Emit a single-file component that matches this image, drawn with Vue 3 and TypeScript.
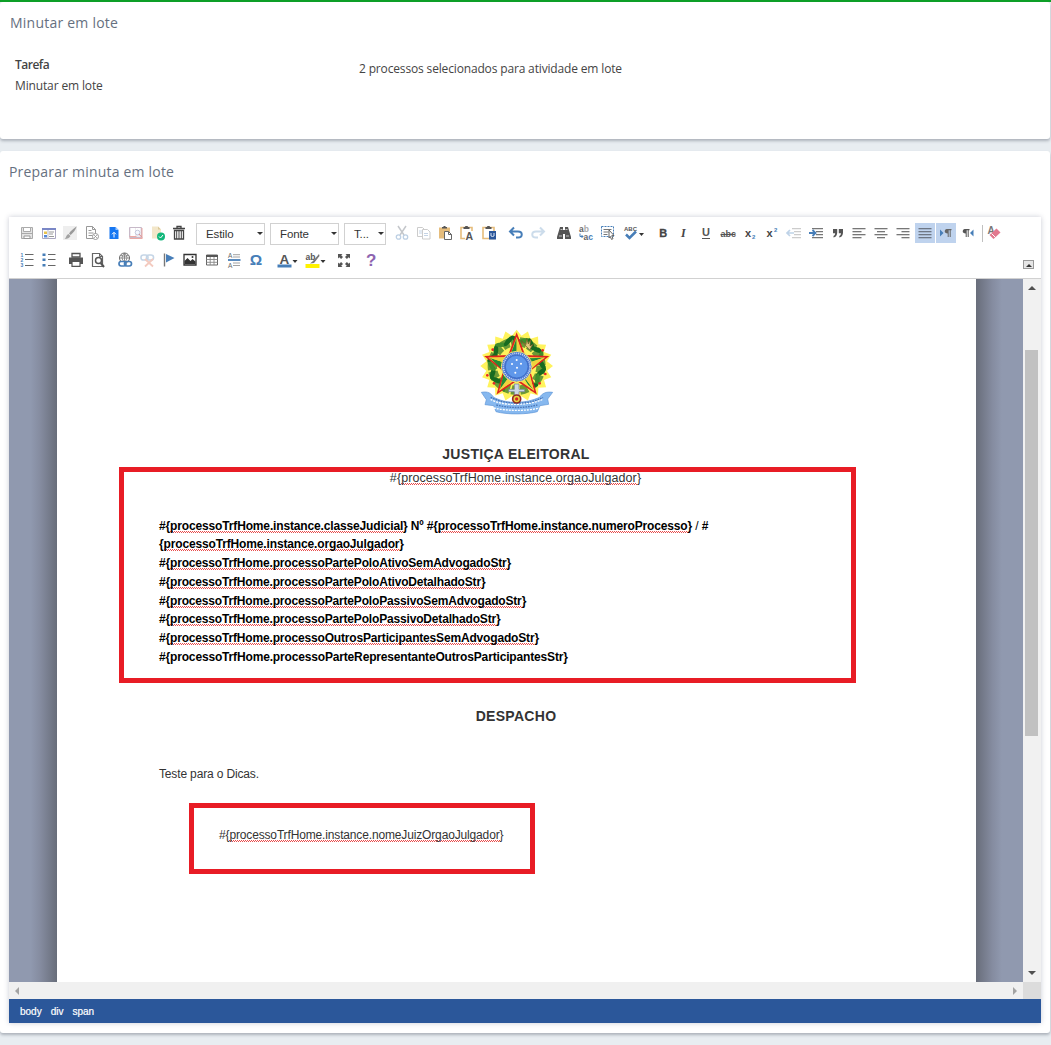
<script setup lang="ts">
interface Tool {
  icon: string
  name: string
  active?: boolean
  wide?: boolean
}

interface Segment {
  text: string
  wavy?: boolean
  light?: boolean
}

const lines = (x: number, w: number[], c = '#777', right = false, center = false): string =>
  w
    .map((n, i) => {
      const start = right ? x + 13 - n : center ? x + (13 - n) / 2 : x
      return `<rect x="${start}" y="${5 + i * 3}" width="${n}" height="1.3" fill="${c}"/>`
    })
    .join('')

const icons: Record<string, string> = {
  save: '<path d="M4.500 4.500h11v11h-11z" fill="#e4e4e4" stroke="#aaa"/><path d="M6.500 4.500h7v4h-7z" fill="#fff" stroke="#aaa"/><path d="M4 10.500h12" stroke="#aaa"/><path d="M7 13h6v2.500H7z" fill="#fff" stroke="#999"/>',
  template: '<path d="M3.500 5.500h13v10h-13z" fill="#fff" stroke="#aaa7c0"/><path d="M3 5h14v2H3z" fill="#7a87c6"/><path d="M5 8.500h3v2.500H5z" fill="#e8c24c"/><path d="M5 12h3v2.500H5z" fill="#5689d8"/><path d="M10 9h5M10 11h4M10 13.500h5" stroke="#999"/><path d="M9 7v8" stroke="#bbc"/>',
  brush: '<path d="M3 3h14v14H3z" fill="#eee"/><path d="M16.500 3.500C14 5 10.500 8 9 10.500l1.500 1.500C13 10 16 6.500 16.500 3.500z" fill="#999"/><path d="M8.500 11l2 2c-1 2-3 3-6 3 1.800-1 1.500-4 4-5z" fill="#a2a2a2"/>',
  pageOff: '<path d="M4.500 3.500h6l3 3v9h-9z" fill="#fff" stroke="#999"/><path d="M10.500 3.500v3h3M6.500 7.500h3M6.500 10h5M6.500 12.500h4" stroke="#999" fill="none"/><circle cx="13.500" cy="13.500" r="3" fill="#fff" stroke="#999"/><path d="M12.200 12.200l2.600 2.600m0-2.600l-2.600 2.600" stroke="#999"/>',
  upload: '<path d="M5.500 4h6l3 3v9h-9z" fill="#1677f2"/><path d="M11.500 4v3h3z" fill="#9ac7ff"/><path d="M10 14.500v-5M8 11.300l2-2 2 2" stroke="#fff" fill="none"/>',
  book: '<path d="M3.500 4.500h12v10h-12z" fill="#eeeaf0" stroke="#c7b9c8"/><path d="M5 5h4v8H5zM10 5h4v5h-4z" fill="#fff"/><path d="M3.500 13.500h7M3.500 15.500h13M16 5v10" stroke="#eba9a5"/><circle cx="11.500" cy="9.500" r="2.300" fill="#f5f8ff" stroke="#c5c9dc"/><path d="M13 11l3 3.500" stroke="#df8d8d"/>',
  approve: '<path d="M4 3.500h6l3 3v9H4z" fill="#f3e7ca"/><path d="M10 3.500v3h3z" fill="#dcc999"/><circle cx="13" cy="13.500" r="4" fill="#12b77b"/><path d="M11 13.500l1.500 1.500 2.500-3" stroke="#fff" fill="none"/>',
  trash: '<path d="M4 5.500h12M8 5V3.500h4V5M5.500 7.500h9v8.500h-9z" stroke="#444" stroke-width="1.300" fill="none"/><path d="M7.700 8v8M10 8v8M12.300 8v8" stroke="#444"/>',
  cut: '<path d="M6 3l6 9M14 3l-6 9" stroke="#c4c7cb" stroke-width="1.500"/><circle cx="6.500" cy="14" r="2.200" stroke="#bdd0e4" stroke-width="1.300" fill="none"/><circle cx="13.500" cy="14" r="2.200" stroke="#bdd0e4" stroke-width="1.300" fill="none"/>',
  copy: '<path d="M3.500 4.500h5l2 2v7h-7z" fill="#fff" stroke="#ccc"/><path d="M8.500 6.500h5l2.500 2.500v7h-7.500z" fill="#fff" stroke="#ccc"/><path d="M10 10.500h4M10 12.500h4M5 8h3M5 10h3" stroke="#c5d4e5"/>',
  paste: '<path d="M4 4.500h11v11H4z" fill="#e6bd7c"/><path d="M7 5.500V4h1.500V3h2v1H12v1.500z" fill="#555"/><path d="M9.500 8.500h4l3 3v5h-7z" fill="#fff" stroke="#666"/><path d="M13.500 8.500v3h3" fill="none" stroke="#666"/>',
  pasteText: '<path d="M4 4.500h11v11H4z" fill="#fff" stroke="#e6bd7c" stroke-width="1.600"/><path d="M6.500 6V4h1.700V3h2.600v1h1.700v2z" fill="#555"/><path d="M8 8h9v9H8z" fill="#fff"/><text x="8.500" y="17" font-size="10.500" font-weight="bold" fill="#555">A</text>',
  pasteWord: '<path d="M4 4.500h11v11H4z" fill="#fff" stroke="#e6bd7c" stroke-width="1.600"/><path d="M6.500 6V4h1.700V3h2.600v1h1.700v2z" fill="#555"/><path d="M10 8h7v8.500h-7z" fill="#2b579a"/><path d="M12 10v3l1.500 .5 1.500-.5v-3" stroke="#dce6f5" fill="none"/>',
  undo: '<path d="M5 8.500h7c5 0 5 6 0 6h-2M8 4.500l-4 4 4 4" stroke="#477eb8" stroke-width="2" fill="none"/>',
  redo: '<path d="M15 8.500H8c-5 0-5 6 0 6h2M12 4.500l4 4-4 4" stroke="#ccdceb" stroke-width="2" fill="none"/>',
  find: '<path d="M6 4h3v3h2V4h3l3 10v2h-6v-5H9v5H3v-2z" fill="#555"/><path d="M5 13h3M12 13h3M6.500 6.500h2M11.500 6.500h2" stroke="#ddd" stroke-width=".8"/>',
  replace: '<text x="3" y="8.500" font-size="8.500" font-weight="bold" fill="#666">a<tspan fill="#aaa">b</tspan></text><text x="7.500" y="17" font-size="8.500" font-weight="bold" fill="#666">a<tspan fill="#477eb8">c</tspan></text><path d="M4 10.500v3h3M5.500 12l1.500 1.500L5.500 15" fill="none" stroke="#477eb8"/>',
  select: '<path d="M3.500 3.500h12v10h-12z" fill="none" stroke="#477eb8" stroke-dasharray="2 1"/><path d="M5.500 6.500h8M5.500 9h5M5.500 11.500h4" stroke="#777"/><path d="M11 7l5 5.500-2.300.2 1.300 3-1.500.7-1.300-3L11 15z" fill="#fff" stroke="#555" stroke-width=".9"/>',
  spell: '<text x="2" y="7.500" font-size="6" font-weight="bold" fill="#555">ABC</text><path d="M4 11.500l3.500 3.500L14 8.500" stroke="#477eb8" stroke-width="2.500" fill="none"/><path d="M17 10h5l-2.500 3z" fill="#333"/>',
  bold: '<text x="6.200" y="14" font-size="11" font-weight="bold" fill="#444" stroke="#444" stroke-width=".3">B</text>',
  italic: '<text x="7" y="14" font-size="12" font-style="italic" font-weight="bold" font-family="Liberation Serif" fill="#444">I</text>',
  underline: '<text x="6" y="13" font-size="11" font-weight="bold" fill="#555">U</text><path d="M6 15.500h8" stroke="#555"/>',
  strike: '<text x="2.500" y="13.800" font-size="9" font-weight="bold" fill="#555">abc</text><path d="M2.500 11.500h15" stroke="#555"/>',
  sub: '<text x="5" y="13.500" font-size="11" font-weight="bold" fill="#444">x</text><text x="12" y="15.500" font-size="6" font-weight="bold" fill="#477eb8">2</text>',
  sup: '<text x="4.500" y="13.500" font-size="11" font-weight="bold" fill="#444">x</text><text x="12" y="8.800" font-size="6" font-weight="bold" fill="#477eb8">2</text>',
  outdent: '<path d="M8 5.700h9M10 8.700h7M10 11.700h7M8 14.700h9" stroke="#ccc" stroke-width="1.200"/><path d="M3 10h7M6 7l-3 3 3 3" stroke="#bfd3e8" stroke-width="1.700" fill="none"/>',
  indent: '<path d="M6 5.700h11M10 8.700h7M10 11.700h7M6 14.700h11" stroke="#777" stroke-width="1.200"/><path d="M3 10h6M6.500 7l3 3-3 3" stroke="#477eb8" stroke-width="1.800" fill="none"/>',
  quote: '<path d="M5 6h4.200v4q-.5 4-3.700 4.500v-1.500q1.700-.7 1.700-2.700H5zM10.800 6H15v4q-.5 4-3.700 4.500v-1.500q1.700-.7 1.700-2.700h-2.200z" fill="#555"/>',
  left: lines(3.5, [13, 9, 13, 9]),
  center: lines(3.5, [13, 8, 13, 8], '#777', false, true),
  right: lines(3.5, [13, 8, 13, 8], '#777', true),
  justify: lines(3.5, [13, 13, 13, 13], '#6e7785'),
  ltr: '<path d="M4 6.500l3.500 3.500L4 13.500z" fill="#477eb8"/><path d="M10.500 6h5v1.200h-.8V14h-1V7.200h-1V14h-1v-3.500q-3-.2-3-2.200t1.800-2.300z" fill="#666"/>',
  rtl: '<path d="M15.500 6.500L12 10l3.500 3.500z" fill="#477eb8"/><path d="M6.500 6h5v1.200h-.8V14h-1V7.200h-1V14h-1v-3.500q-3-.2-3-2.200T6.500 6z" fill="#555"/>',
  erase: '<text x="3.500" y="11" font-size="10" font-weight="bold" fill="#777">A</text><path d="M12.500 5.500l4 4-7 6.500-4-4z" fill="#e2798f"/><path d="M7.500 10.500l4 4" stroke="#fff"/>',
  ordered: '<text x="3.500" y="7" font-size="5" font-weight="bold" fill="#477eb8">1</text><text x="3.500" y="12" font-size="5" font-weight="bold" fill="#477eb8">2</text><text x="3.500" y="17" font-size="5" font-weight="bold" fill="#477eb8">3</text><path d="M8 4.500h8.500M8 9.500h8.500M8 15.500h8.500" stroke="#666" stroke-width="1.200"/>',
  bullets: '<path d="M3.500 3.500h3v2.600h-3zM3.500 8.500h3v2.600h-3zM3.500 14h3v2.600h-3z" fill="#477eb8"/><path d="M9 4.500h7.500M9 9.500h7.500M9 15.500h7.500" stroke="#666" stroke-width="1.200"/>',
  print: '<path d="M6 3.500h8V7H6z" fill="#fff" stroke="#555" stroke-width="1.300"/><path d="M3 7.500h14V14H3z" fill="#555"/><path d="M6 11.500h8v4.800H6z" fill="#fff" stroke="#555" stroke-width="1.200"/>',
  preview: '<path d="M4.500 3.500h7l3 3v10h-10z" fill="#fff" stroke="#666" stroke-width="1.200"/><path d="M11.500 3.500v3h3" fill="none" stroke="#666"/><circle cx="10.500" cy="10.500" r="3" fill="#fff" stroke="#555" stroke-width="1.500"/><path d="M12.700 13l3.300 4" stroke="#555" stroke-width="2"/>',
  link: '<circle cx="9.500" cy="8" r="5" fill="#fff" stroke="#666"/><path d="M4.500 8h10M9.500 3v9M6 5.500q3.500 1.500 7 0M9.500 3q-5 5 0 9M9.500 3q5 5 0 9" stroke="#777" fill="none" stroke-width=".8"/><rect x="4" y="11.500" width="7" height="4.500" rx="2.200" fill="#fff" stroke="#477eb8" stroke-width="1.700"/><rect x="9.500" y="11.500" width="7" height="4.500" rx="2.200" fill="none" stroke="#477eb8" stroke-width="1.700"/>',
  unlink: '<rect x="4" y="5" width="7" height="5" rx="2.300" fill="none" stroke="#c5d5e6" stroke-width="1.600"/><rect x="9.500" y="5" width="7" height="5" rx="2.300" fill="none" stroke="#c5d5e6" stroke-width="1.600"/><path d="M8 9l8 7.500M16 9l-8 7.500" stroke="#f3cabf" stroke-width="1.800"/>',
  flag: '<path d="M5.500 3.500v13" stroke="#777" stroke-width="1.400"/><path d="M7 4l8.500 4L7 12.500z" fill="#477eb8"/>',
  image: '<path d="M4 4.500h12v10.500H4z" fill="#fff" stroke="#333" stroke-width="1.300"/><path d="M4.500 14v-3l3-3 3 3 2-2 3 2.500v2.500z" fill="#333"/><circle cx="12.500" cy="7" r="1" fill="#333"/>',
  table: '<path d="M4.500 5h11v10h-11z" fill="#fff" stroke="#666"/><path d="M4 5h12v2H4z" fill="#555"/><path d="M4.500 9.500h11M4.500 12.300h11M8.200 7v8M12 7v8" stroke="#888" stroke-width=".9"/>',
  rule: '<text x="4" y="8" font-size="6.500" fill="#666">A</text><text x="4" y="17.500" font-size="6.500" fill="#666">A</text><path d="M9 4.700h7M9 7h7M9 13h7M9 15.500h7" stroke="#999" stroke-width=".9"/><path d="M4 10h12.500" stroke="#477eb8" stroke-width="1.800"/>',
  omega: '<text x="3.800" y="15" font-size="15.500" font-weight="bold" fill="#477eb8">Ω</text>',
  color: '<text x="4.500" y="13.500" font-size="13.500" font-weight="bold" fill="#555">A</text><path d="M2.500 14.500h14v3h-14z" fill="#477eb8"/><path d="M17.500 10h5l-2.500 3z" fill="#333"/>',
  highlight: '<path d="M2.500 14h14v4h-14z" fill="#fff200"/><text x="2.500" y="9.500" font-size="8.500" font-weight="bold" fill="#555">ab</text><path d="M16 4l-6 7-3 2.500 4-.5 5.500-7z" fill="#777"/><path d="M17.500 10h5l-2.500 3z" fill="#333"/>',
  expand: '<path d="M4 4h4.500L7.200 5.300 9 7.100 7.100 9 5.300 7.200 4 8.500zM16 4v4.500l-1.300-1.300L12.900 9 11 7.100l1.800-1.800L11.500 4zM4 17v-4.500l1.300 1.300L7.100 12 9 13.900l-1.800 1.800L8.500 17zM16 17h-4.500l1.300-1.300-1.800-1.800 1.900-1.900 1.800 1.800 1.300-1.300z" fill="#555"/>',
  help: '<text x="4.900" y="16" font-size="17" font-weight="bold" fill="#8e64b0">?</text>',
}

const t = (icon: string, name: string, extra: Partial<Tool> = {}): Tool => ({ icon, name, ...extra })

const documentTools: Tool[] = [
  t('save', 'Salvar'), t('template', 'Modelo'), t('brush', 'Formatar'), t('pageOff', 'Nova página'),
  t('upload', 'Enviar'), t('book', 'Consultar'), t('approve', 'Aprovar'), t('trash', 'Excluir'),
]
const combos = [
  { label: 'Estilo', size: 'combo-m' },
  { label: 'Fonte', size: 'combo-m' },
  { label: 'T...', size: 'combo-s' },
]
const topGroups: { id: string; tools: Tool[] }[] = [
  { id: 'g-clip', tools: [t('cut', 'Recortar'), t('copy', 'Copiar'), t('paste', 'Colar'), t('pasteText', 'Colar texto'), t('pasteWord', 'Colar do Word')] },
  { id: 'g-undo', tools: [t('undo', 'Desfazer'), t('redo', 'Refazer')] },
  { id: 'g-find', tools: [t('find', 'Localizar'), t('replace', 'Substituir'), t('select', 'Selecionar tudo'), t('spell', 'Ortografia', { wide: true })] },
  { id: 'g-style', tools: [t('bold', 'Negrito'), t('italic', 'Itálico'), t('underline', 'Sublinhado'), t('strike', 'Tachado'), t('sub', 'Subscrito'), t('sup', 'Sobrescrito')] },
  { id: 'g-par', tools: [
    t('outdent', 'Diminuir recuo'), t('indent', 'Aumentar recuo'), t('quote', 'Citação'), t('left', 'Esquerda'),
    t('center', 'Centralizar'), t('right', 'Direita'), t('justify', 'Justificar', { active: true }),
    t('ltr', 'Esquerda para direita', { active: true }), t('rtl', 'Direita para esquerda'),
  ] },
]
const bottomGroups: { id: string; tools: Tool[] }[] = [
  { id: 'b-list', tools: [t('ordered', 'Lista numerada'), t('bullets', 'Lista')] },
  { id: 'b-print', tools: [t('print', 'Imprimir'), t('preview', 'Visualizar')] },
  { id: 'b-insert', tools: [t('link', 'Link'), t('unlink', 'Remover link'), t('flag', 'Âncora'), t('image', 'Imagem'), t('table', 'Tabela'), t('rule', 'Quebra'), t('omega', 'Símbolo')] },
  { id: 'b-color', tools: [t('color', 'Cor do texto', { wide: true }), t('highlight', 'Cor de fundo', { wide: true })] },
  { id: 'b-max', tools: [t('expand', 'Maximizar')] },
  { id: 'b-help', tools: [t('help', 'Ajuda')] },
]

const field = (name: string): Segment[] => [{ text: '#{' }, { text: name, wavy: true }, { text: '}' }]
const processLines: Segment[][] = [
  [
    ...field('processoTrfHome.instance.classeJudicial'),
    { text: ' Nº ' },
    ...field('processoTrfHome.instance.numeroProcesso'),
    { text: ' / ', light: true },
    { text: '#' },
  ],
  [{ text: '{' }, { text: 'processoTrfHome.instance.orgaoJulgador', wavy: true }, { text: '}' }],
  field('processoTrfHome.processoPartePoloAtivoSemAdvogadoStr'),
  field('processoTrfHome.processoPartePoloAtivoDetalhadoStr'),
  field('processoTrfHome.processoPartePoloPassivoSemAdvogadoStr'),
  field('processoTrfHome.processoPartePoloPassivoDetalhadoStr'),
  field('processoTrfHome.processoOutrosParticipantesSemAdvogadoStr'),
  [{ text: '#{processoTrfHome.processoParteRepresentanteOutrosParticipantesStr}' }],
]

const starPoints = (cx: number, cy: number, outer: number, inner: number, n = 5): string =>
  Array.from({ length: n * 2 }, (_, i) => {
    const r = i % 2 ? inner : outer
    const a = -Math.PI / 2 + (i * Math.PI) / n
    return `${(cx + r * Math.cos(a)).toFixed(1)},${(cy + r * Math.sin(a)).toFixed(1)}`
  }).join(' ')

const leaves = Array.from({ length: 17 }, (_, i) => {
  const a = ((125 + i * 18) * Math.PI) / 180
  return { x: 140 + 76 * Math.cos(a), y: 135 + 76 * Math.sin(a), r: 125 + i * 18 + (i % 2 ? 60 : 125) }
})
</script>

<template>
  <div class="page">
    <section class="card task-card">
      <h2 class="card-title">Minutar em lote</h2>
      <div class="task-row">
        <div class="task">
          <strong class="task-label">Tarefa</strong>
          <span class="task-name">Minutar em lote</span>
        </div>
        <p class="selection">2 processos selecionados para atividade em lote</p>
      </div>
    </section>

    <section class="card draft-card">
      <h2 class="card-title draft-title">Preparar minuta em lote</h2>
      <div class="editor">
        <div class="toolbar">
          <div class="tool-row">
            <div class="group g-doc">
              <span v-for="b in documentTools" :key="b.icon" class="tool" :aria-label="b.name">
                <svg width="20" height="20" viewBox="0 0 20 20" v-html="icons[b.icon]"></svg>
              </span>
            </div>
            <div class="combos">
              <span v-for="c in combos" :key="c.label" class="combo" :class="c.size">
                {{ c.label }}<i class="caret"></i>
              </span>
            </div>
            <div v-for="g in topGroups" :key="g.id" class="group" :class="g.id">
              <span v-for="b in g.tools" :key="b.icon" class="tool" :class="{ active: b.active, wide: b.wide }" :aria-label="b.name">
                <svg width="20" height="20" viewBox="0 0 20 20" v-html="icons[b.icon]"></svg>
              </span>
            </div>
            <i class="separator"></i>
            <span class="tool" aria-label="Remover formatação">
              <svg width="20" height="20" viewBox="0 0 20 20" v-html="icons.erase"></svg>
            </span>
          </div>
          <div class="tool-row second">
            <div v-for="g in bottomGroups" :key="g.id" class="group" :class="g.id">
              <span v-for="b in g.tools" :key="b.icon" class="tool" :class="{ wide: b.wide }" :aria-label="b.name">
                <svg width="20" height="20" viewBox="0 0 20 20" v-html="icons[b.icon]"></svg>
              </span>
            </div>
            <span class="collapse"><i class="collapse-arrow"></i></span>
          </div>
        </div>

        <div class="viewport">
          <div class="desk desk-left"></div>
          <article class="sheet">
            <svg class="emblem" width="95" height="100" viewBox="0 0 285 300">
              <polygon :points="starPoints(140, 138, 109, 92, 20)" fill="#fff35c" />
              <circle cx="140" cy="138" r="73" fill="none" stroke="#6b9a35" stroke-width="28" stroke-dasharray="22 5" />
              <ellipse v-for="(l, i) in leaves" :key="i" :cx="l.x" :cy="l.y" rx="19" ry="7" :fill="i % 3 ? '#176b20' : '#3f8d2c'" :transform="`rotate(${l.r} ${l.x} ${l.y})`" />
              <path d="M153 62l15 12 2-18 5 16 7-14-2 20 9-5-10 17z" fill="#e1c77b" stroke="#665320" stroke-width="2" />
              <g fill="#e82727">
                <circle cx="68" cy="89" r="4" /><circle cx="52" cy="166" r="4" /><circle cx="218" cy="91" r="4" /><circle cx="226" cy="162" r="4" /><circle cx="72" cy="190" r="4" /><circle cx="209" cy="190" r="4" />
              </g>
              <path d="M133 192h14v16h17v7h-17v32h-14v-32h-17v-7h17z" fill="#ccd7e5" stroke="#6b7890" stroke-width="2" />
              <polygon :points="starPoints(140, 140, 103, 43)" fill="#de251e" />
              <polygon :points="starPoints(140, 140, 90, 36)" fill="#f7df45" />
              <path d="M140 54v86L119 111zM221 113l-81 27 35-25zM190 208l-50-68 35 55zM90 208l50-68-36 7zM59 113l81 27-48 4z" fill="#258b35" />
              <path d="M140 54v86l21-29zM221 113l-81 27 48 3zM190 208l-50-68 36 7zM90 208l50-68-16 48zM59 113l81 27-35-26z" fill="#f0d33d" />
              <circle cx="140" cy="140" r="46" fill="#4876d2" stroke="#f7e46b" stroke-width="3" />
              <circle cx="140" cy="140" r="40" fill="none" stroke="#d4e1f5" stroke-width="5" stroke-dasharray="3 3" />
              <circle cx="140" cy="140" r="34" fill="#5f97ea" stroke="#3764bd" stroke-width="2" />
              <g fill="#fff"><circle cx="140" cy="120" r="3" /><circle cx="141" cy="143" r="3" /><circle cx="126" cy="132" r="3" /><circle cx="153" cy="131" r="3" /><circle cx="136" cy="158" r="3" /></g>
              <path d="M34 217c21-4 29 3 37 15 29 14 52 16 69 14 27 1 45-4 69-14 7-12 19-18 39-15l-15 20 3 16-26 4-8 18c-28 8-90 10-124 0l-7-18-26-3 4-15z" fill="#86b8ef" stroke="#5f95d6" stroke-width="2" />
              <path d="M62 238c16 10 46 16 78 15s59-5 78-15M72 264c38 9 97 10 136 0" fill="none" stroke="#fff" stroke-width="4" stroke-dasharray="6 3" />
              <path d="M62 232c42 22 115 24 157 0M79 255c42 10 80 10 123 0" fill="none" stroke="#4a76b8" stroke-width="4" stroke-dasharray="5 3" />
              <circle cx="140" cy="237" r="12" fill="#e8d442" stroke="#8f2c24" stroke-width="5" />
              <circle cx="140" cy="237" r="5" fill="#d82822" />
            </svg>
            <h1 class="heading court">JUSTIÇA ELEITORAL</h1>
            <p class="organ">#{<span class="wavy">processoTrfHome.instance.orgaoJulgador</span>}</p>
            <div class="process">
              <p v-for="(line, n) in processLines" :key="n" class="process-line" :class="`line-${n + 1}`"><span v-for="(s, i) in line" :key="i" :class="{ wavy: s.wavy, light: s.light }">{{ s.text }}</span></p>
            </div>
            <h1 class="heading order">DESPACHO</h1>
            <p class="text">Teste para o Dicas.</p>
            <p class="judge">#{<span class="wavy">processoTrfHome.instance.nomeJuizOrgaoJulgador</span>}</p>
            <div class="mark mark-process"></div>
            <div class="mark mark-judge"></div>
          </article>
          <div class="desk desk-right"></div>
          <div class="vscroll">
            <i class="up"></i>
            <div class="track"><div class="thumb"></div></div>
            <i class="down"></i>
          </div>
        </div>
        <div class="hscroll">
          <div class="htrack"><i class="prev"></i><i class="next"></i></div>
          <div class="corner"></div>
        </div>
        <footer class="path">
          <span>body</span><span>div</span><span>span</span>
        </footer>
      </div>
    </section>
  </div>
</template>

<style>
body {
  background: #e8edf1;
  overflow: hidden;
}
</style>

<style scoped>
.page {
  width: 1051px;
  height: 1045px;
  overflow: hidden;
  background: #e8edf1;
  border-top: 2px solid #0d9f27;
  box-sizing: border-box;
  font-family: "Open Sans", sans-serif;
  color: #444;
}
h1, h2, p { margin: 0; }
.card {
  background: #fff;
  border-radius: 3px;
  box-shadow: 0 2px 3px rgba(60, 70, 85, 0.35);
  box-sizing: border-box;
  width: 1050px;
}
.task-card { height: 137px; padding: 11px 0 0 10px; }
.card-title {
  font-size: 14px;
  line-height: 20px;
  font-weight: 400;
  color: #667080;
  letter-spacing: 0.23px;
}
.draft-title { letter-spacing: 0.2px; }
.task-row { display: flex; padding: 22px 0 0 5px; font-size: 12px; letter-spacing: -0.14px; }
.task { width: 344px; display: flex; flex-direction: column; line-height: 20.5px; }
.task-label { font-weight: 600; letter-spacing: -0.5px; }
.selection { padding-top: 4px; line-height: 20px; letter-spacing: -0.155px; }
.draft-card { margin-top: 12px; height: 882px; padding: 11px 9px 0; }
.editor {
  margin-top: 35px;
  height: 806px;
  width: 1032px;
  box-shadow: 0 0 5px rgba(60, 70, 100, 0.28);
  font-family: "Liberation Sans", Arial, sans-serif;
}
.toolbar {
  height: 62px;
  box-sizing: border-box;
  padding: 3px 0 0 7px;
  border-bottom: 1px solid #d1d1d1;
  background: #fff;
}
.tool-row { display: flex; align-items: center; height: 26px; }
.tool-row.second { height: 28px; }
.group { display: flex; }
.tool {
  width: 21.8px;
  height: 20px;
  display: flex;
  justify-content: center;
  flex: none;
}
.tool svg { flex: none; overflow: visible; font-family: "Liberation Sans", Arial, sans-serif; }
.tool.active { background: #bfd3ee; width: 20px; margin: 0 0.900px; }
.combos { display: flex; gap: 5px; margin: 2px 0 0 5.600px; }
.combo {
  height: 22px;
  box-sizing: border-box;
  border: 1px solid #d1d1d1;
  display: flex;
  align-items: center;
  justify-content: space-between;
  padding: 0 1px 1px 9px;
  font-size: 11.500px;
  letter-spacing: -0.1px;
  color: #333;
}
.combo-m { width: 69px; }
.combo-s { width: 42px; }
.caret { border: 3px solid transparent; border-top-color: #333; border-bottom: 0; }
.g-clip { margin-left: 5px; }
.g-undo { margin-left: 5px; }
.g-find { margin-left: 5px; }
.g-find .wide { margin-left: 2.500px; }
.g-style { margin-left: 8.500px; }
.g-par { margin-left: 0.500px; }
.separator { width: 1px; height: 17px; background: #c0c0c0; margin: 0 0 0 3px; }
.b-print { margin-left: 5.500px; }
.b-insert { margin-left: 5.500px; }
.b-color { margin-left: 8.500px; }
.b-color .wide { width: 27.500px; justify-content: flex-start; }
.b-max { margin-left: 3px; }
.b-help { margin-left: 5px; }
.collapse {
  margin: 9px 7px 0 auto;
  width: 11px;
  height: 9px;
  box-sizing: border-box;
  border: 1px solid #999;
  background: #e6e6e6;
  display: flex;
  align-items: flex-end;
  justify-content: center;
  padding-bottom: 1px;
}
.collapse-arrow { border: 3px solid transparent; border-bottom-color: #333; border-top: 0; }
.viewport { display: flex; height: 703px; }
.desk { width: 47px; background: linear-gradient(270deg, #9099af 45%, #858ca0 65%, #686d7a 100%); }
.desk-left { width: 48px; background: linear-gradient(90deg, #9099af 45%, #858ca0 65%, #686d7a 100%); }
.sheet {
  position: relative;
  width: 919px;
  box-sizing: border-box;
  background: #fff;
  padding: 41px 102px 0;
  font-size: 12px;
  color: #333;
}
.emblem { display: block; margin-left: 311px; }
.heading { font-size: 14px; line-height: 20px; font-weight: 700; text-align: center; }
.court { margin: 24px 1px 0 0; letter-spacing: 0.3px; }
.organ { margin: 4px 2px 0 0; line-height: 20px; text-align: center; font-size: 12.500px; letter-spacing: 0.09px; }
.process { margin-top: 28.500px; font-weight: 700; color: #000; }
.process-line { line-height: 18.750px; white-space: pre; letter-spacing: -0.17px; }
.line-1, .line-2 { letter-spacing: -0.147px; }
.line-8 { letter-spacing: -0.16px; }
.light { font-weight: 400; }
.order { margin: 39.500px 1px 0 0; letter-spacing: 0.3px; }
.text { margin-top: 38px; line-height: 20px; letter-spacing: -0.15px; }
.judge { margin: 41px 0 0 60px; line-height: 20px; letter-spacing: -0.15px; }
.wavy {
  background-image: linear-gradient(90deg, #e84a4a 50%, transparent 50%), linear-gradient(90deg, transparent 50%, #e84a4a 50%);
  background-size: 2px 1px, 2px 1px;
  background-position: 0 calc(100% - 1px), 0 100%;
  background-repeat: repeat-x;
}
.mark { position: absolute; border: 5px solid #e81c25; box-sizing: border-box; }
.mark-process { left: 62px; top: 188px; width: 737px; height: 216px; }
.mark-judge { left: 132px; top: 524px; width: 346px; height: 71px; }
.vscroll {
  width: 18px;
  background: #f1f1f1;
  display: flex;
  flex-direction: column;
  align-items: center;
  box-sizing: border-box;
  padding-right: 1px;
}
.up { margin-top: 7px; border: 4px solid transparent; border-bottom-color: #505050; border-top: 0; }
.down { margin-bottom: 7px; border: 4px solid transparent; border-top-color: #505050; border-bottom: 0; }
.track { flex: 1; padding-top: 60px; }
.thumb { width: 13px; height: 386px; background: #c1c1c1; }
.hscroll { display: flex; height: 17px; }
.htrack { flex: 1; background: #f0f0f0; display: flex; align-items: center; justify-content: space-between; padding: 0 6px; }
.prev { border: 4px solid transparent; border-right-color: #a3a3a3; border-left: 0; }
.next { border: 4px solid transparent; border-left-color: #a3a3a3; border-right: 0; }
.corner { width: 18px; background: #dcdcdc; }
.path {
  height: 24px;
  background: #2b579a;
  color: #fff;
  display: flex;
  align-items: center;
  gap: 9px;
  padding: 0 0 0 11px;
  font-size: 10px;
  -webkit-text-stroke: 0.2px #fff;
}
</style>
